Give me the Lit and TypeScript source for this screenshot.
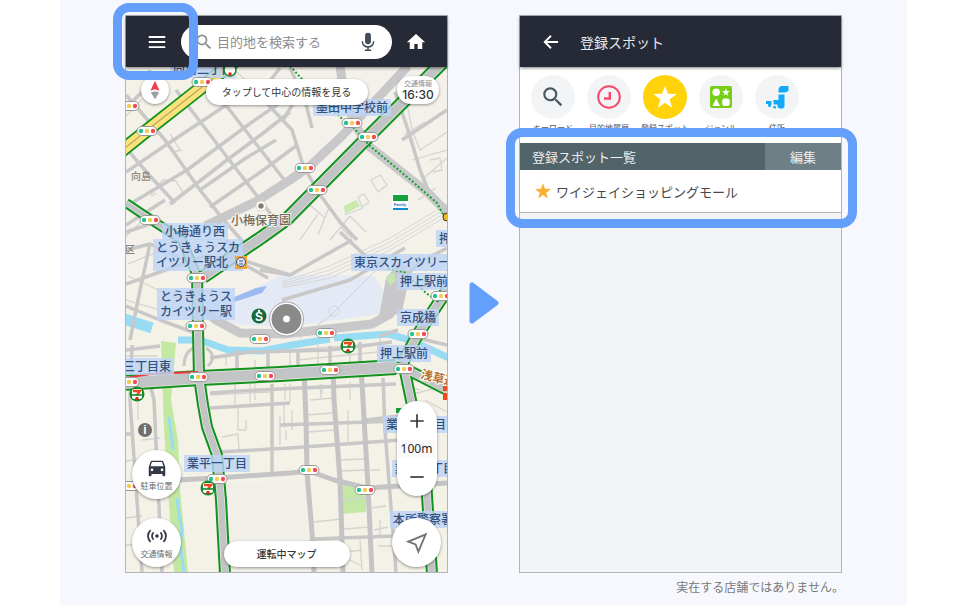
import { LitElement, html, svg, css } from "lit";
import { customElement } from "lit/decorators.js";
import { classMap } from "lit/directives/class-map.js";

const FONT = css`"Noto Sans CJK JP", "Noto Sans", sans-serif`;

/* ---------- map data (one unit = one CSS pixel at base width) ---------- */

const thinStreets = [
  "M126 116L142 99M126 236L150 214M128 264L160 251M163 139L172 152L182 150M152 193L163 180L176 181L184 194",
  "M149 190L152 196L156 193M170 134L180 150M232 68L250 84M215 68L233 90",
  "M405 92L412 130L420 150L447 132M404 135L425 122M412 160L447 150M424 178L447 158M430 160L440 158L442 170L433 172M418 200L436 188",
  "M371 180L380 175L387 185L378 192ZM358 197L364 194L369 202L362 207ZM345 215L363 208M330 240L350 216M318 235L330 205M300 240L318 214",
  "M340 227L352 238M310 205L325 218M350 216L366 232",
  "M255 360V400M226 356V366M290 352V367M318 345V366M350 342V365M380 338V362M255 352L380 344M297 360L378 352",
  "M126 356H158M138 398V420M210 395L270 392M235 384V404M250 384V402M290 384V402M310 400L334 398M320 384L321 398M350 382V400",
  "M238 408V430H246V420M222 437L238 434L239 450M280 415V445M286 430V440M292 410V430M284 405V428M348 410V442",
  "M306 415L333 413M308 432L334 430M338 460L365 459M340 471L366 470M370 470H380M372 508L386 506M374 530L388 527M378 546H392",
  "M344 500L366 497M313 522L342 519M344 529L370 527M360 540L362 570M346 552L362 550M350 560L362 566M380 520V535",
  "M126 461L150 458M126 518L142 516M126 545L142 544M142 440L160 438M410 395L447 385M425 400L447 412M400 384L420 390",
  "M285 384V400M322 384V394M126 300L160 310M160 250L175 262M128 276L180 300",
];

const streets = [
  "M126 95L165 140L200 190L222 218L250 250",
  "M176 90L227 157L264 205L275 220",
  "M214 90L253 140L286 182",
  "M262 98L292 130L303 165L318 192L340 222L357 240",
  "M126 148L150 176L175 203",
  "M126 172L163 147L240 96",
  "M130 204L187 170L252 122L290 96",
  "M170 204L227 160L262 134L290 112",
  "M200 190L246 158L276 140",
  "M210 207L262 171L296 146",
  "M126 225L165 200",
  "M126 108L142 92L150 70",
  "M290 68L305 100L312 128M300 92L282 122M280 68L252 104",
  "M395 92L408 130L420 170L430 195M447 110L402 140",
  "M126 250L150 244L190 262M126 232L156 222",
  "M126 284L160 272L205 256L248 262L290 275",
  "M150 244L140 290L130 340",
  "M126 306L160 320L195 333",
  "M226 240L240 262L268 278",
  "M340 232L372 262M352 240L290 275L260 270M405 248L350 280L282 300",
  "M447 248L420 262L402 280",
  "M418 338L447 345M425 322L447 300M398 330L380 336",
  "M126 350L160 346M210 358L250 352L330 350L392 342",
  "M237 350V378M268 350V372M298 352V372M330 346V370M360 342V366",
  "M210 393L240 391L300 388L396 384",
  "M210 408L290 403M280 425L398 421M218 452L290 448L400 440",
  "M132 345L130 400L142 572M150 384L154 400L162 572",
  "M383 378L385 430L392 520L396 572",
  "M313 539L395 536M313 561L345 560M126 484L190 480",
  "M272 384V473M366 420L398 416M126 434H134",
];

const avenues = [
  "M304 368L306 420L307 472L312 533L314 572",
  "M333 368L334 400L340 480L343 572",
  "M361 368L363 400L368 487L372 572",
  "M176 480L217 478L290 473L309 471L334 480L367 488L400 486L447 483",
];

const wideRoads = [
  "M408 66L372 104L342 136L310 166L290 180L257 201L205 226",
  "M340 66L345 100L357 128L370 147L427 192L447 212",
  "M203 310L216 320L240 333L284 334L372 324L390 314L396 290L404 270",
];

const greenRoads = [
  { d: "M443 62L363 142L287 219L262 237L203 277", w: 13 },
  { d: "M126 203L150 219L182 240L197 276", w: 9 },
  { d: "M197 272L198 330L199 377L203 405L207 427L217 455L221 500L225 574", w: 11 },
  { d: "M447 290L418 334L403 362", w: 12 },
  { d: "M403 362L412 405L426 480L432 574", w: 11 },
  { d: "M396 367L404 368L447 390", w: 11 },
  { d: "M120 383L200 378L280 374L396 367", w: 15 },
];

const water = [
  { d: "M124 319L152 328", w: 11 },
  { d: "M178 340L200 340L228 350L262 351L292 345L330 339", w: 7 },
  { d: "M334 338L388 334L410 340L449 358", w: 7 },
  { d: "M169 417L173 450M177 498L179 515L182 530L180 545L184 572", w: 3 },
];

const signals = [
  [202, 82], [129, 106], [147, 131], [150, 220], [352, 123], [368, 137], [305, 168], [317, 190],
  [197, 278], [196, 326], [260, 339], [198, 377], [265, 376], [129, 382], [326, 333], [441, 296],
  [418, 334], [330, 370], [404, 369], [217, 479], [129, 486], [309, 470], [365, 490],
];

const placeNames: { x: number; y: number; lines: string[] }[] = [
  { x: 173, y: 74, lines: ["向島二丁目"] },
  { x: 316, y: 112, lines: ["墨田中学校前"] },
  { x: 165, y: 236, lines: ["小梅通り西"] },
  { x: 156, y: 252, lines: ["とうきょうスカ", "イツリー駅北"] },
  { x: 160, y: 301, lines: ["とうきょうス", "カイツリー駅"] },
  { x: 123, y: 371, lines: ["三丁目東"] },
  { x: 439, y: 243, lines: ["押上"] },
  { x: 354, y: 267, lines: ["東京スカイツリー"] },
  { x: 400, y: 286, lines: ["押上駅前"] },
  { x: 400, y: 322, lines: ["京成橋"] },
  { x: 380, y: 358, lines: ["押上駅前"] },
  { x: 187, y: 468, lines: ["業平一丁目"] },
  { x: 386, y: 429, lines: ["業平三丁目"] },
  { x: 395, y: 473, lines: ["業平四丁目"] },
  { x: 393, y: 524, lines: ["本所警察署"] },
];

const stores = [[137, 394], [348, 346], [208, 488]];

@customElement("area-map")
export class AreaMap extends LitElement {
  static styles = css`
    :host { display: block; }
    svg { display: block; width: 100%; height: auto; font-family: ${FONT}; }
    .thin { stroke: #d5d3d0; stroke-width: 1.3; }
    .street { stroke: #c9c8c8; stroke-width: 3.5; }
    .avenue { stroke: #c4c4c5; stroke-width: 5; }
    .wide { stroke: #c8c8ca; stroke-width: 9; }
    .rail { stroke: #d8d7d4; stroke-width: 1; }
    .line { fill: none; stroke-linejoin: round; }
    .name { font-size: 12px; font-weight: 500; fill: #33517f; }
    .plate { fill: #bdd4f6; fill-opacity: 0.8; }
    .area { font-size: 10px; font-weight: 500; fill: #8b867b; }
    .spot { font-size: 12px; font-weight: 500; fill: #756b5c; stroke: #f5f2e9; stroke-width: 2; paint-order: stroke; }
    .route { font-size: 12px; font-weight: 700; fill: #b8722c; stroke: #fff; stroke-width: 2; paint-order: stroke; }
    .badge { font-family: "Liberation Sans", sans-serif; font-size: 12px; font-weight: 700; fill: #fff; text-anchor: middle; }
    .brand { font-family: "Liberation Sans", sans-serif; font-size: 4px; font-weight: 700; fill: #0a72b5; text-anchor: middle; }
  `;

  private signal([x, y]: number[]) {
    return svg`<g>
      <rect x=${x - 10} y=${y - 4.5} width="20" height="9" rx="4.5" fill="#fff" stroke="#9a9693" />
      <circle cx=${x - 6} cy=${y} r="2.2" fill="#27c095" />
      <circle cx=${x} cy=${y} r="2.2" fill="#f3cb55" />
      <circle cx=${x + 6} cy=${y} r="2.2" fill="#f14e52" />
    </g>`;
  }

  private store([x, y]: number[]) {
    return svg`<g>
      <circle cx=${x} cy=${y} r="7.5" fill="#148a2c" />
      <rect x=${x - 5} y=${y - 5} width="10" height="10" rx="2" fill="#fff" />
      <path d=${`M${x - 4} ${y - 3}H${x + 3}L${x} ${y + 1}`} stroke="#ee4a22" stroke-width="2.4" fill="none" />
      <path d=${`M${x - 5} ${y + 1}H${x + 5}`} stroke="#148a2c" stroke-width="1.6" />
      <circle cx=${x} cy=${y + 4.4} r="1.7" fill="#e9251c" />
    </g>`;
  }

  private place(p: { x: number; y: number; lines: string[] }) {
    const widest = Math.max(...p.lines.map((t) => t.length));
    return svg`
      <rect class="plate" x=${p.x - 3} y=${p.y - 13} width=${widest * 12 + 6} height=${2 + p.lines.length * 15} />
      <text class="name">${p.lines.map((t, i) => svg`<tspan x=${p.x} y=${p.y + i * 15}>${t}</tspan>`)}</text>`;
  }

  render() {
    return html`<svg viewBox="126 67 321 505" role="img" aria-label="地図">
      <rect x="126" y="66" width="321" height="506" fill="#f4f1e7" />
      <path d="M126 150L240 68H447V230L300 300L126 280Z" fill="#f3f1ea" />
      <path d="M225 484L305 479L310 572H229Z" fill="#f0efe8" />
      <path d="M161 341L176 343L171 400L178 440L180 490L188 572H174L168 490L164 430Z" fill="#c3e8a2" />
      <path d="M340 483L366 490V512L341 514Z" fill="#c3e8a5" />
      <path d="M344 206L356 200L360 206L345 214Z" fill="#c9e9ae" />
      <path d="M205 302L240 296L282 275L374 276L383 290L380 314L286 327L240 325L205 312Z" fill="#e4eaf5" />
      <path d="M232 298L256 288L267 286L262 293L234 302Z" fill="#9dbaf0" />
      ${water.map((w) => svg`<path class="line" d=${w.d} stroke="#98dcf3" stroke-width=${w.w} />`)}
      ${thinStreets.map((d) => svg`<path class="line thin" d=${d} />`)}
      ${[0, 4, 8, 12].map((o) => svg`<path class="line rail"
        d=${`M282 ${282 + o / 2}L330 ${266 + o}L390 ${238 + o}L447 ${204 + o}`} />`)}
      ${streets.map((d) => svg`<path class="line street" d=${d} />`)}
      ${avenues.map((d) => svg`<path class="line avenue" d=${d} />`)}
      ${wideRoads.map((d) => svg`<path class="line wide" d=${d} />`)}
      <path d="M184 366Q184 352 194 348M206 348Q218 356 208 366" stroke="#c9c8c8" stroke-width="3" fill="none" />
      <path d="M386 278L400 262L410 274L402 312L378 322Z" fill="#c8c8ca" />
      <path d="M386 278L394 272L396 280L390 286Z" fill="#c5e6b0" />
      <path d="M384 262L330 316L300 338" stroke="#cfd0d4" fill="none" />
      <circle cx="334" cy="311" r="5" stroke="#d2d5dc" fill="none" />

      <path class="line" d="M120 152L150 128L197 91L236 60" stroke="#12931f" stroke-width="14" />
      <path class="line" d="M120 152L150 128L197 91L236 60" stroke="#fbe27c" stroke-width="10.5" />
      <path class="line" d="M120 152L150 128L197 91L236 60" stroke="#c1a557" stroke-width="1.2" />

      ${greenRoads.map((r) => svg`<path class="line" d=${r.d} stroke="#12931f" stroke-width=${r.w + 1} />`)}
      ${greenRoads.map((r) => svg`<path class="line" d=${r.d} stroke="#e6e6e0" stroke-width=${r.w - 3} />`)}
      ${greenRoads.map((r) => svg`<path class="line" d=${r.d} stroke="#c3c4c6" stroke-width=${r.w - 4.5} />`)}
      <path class="line" d="M126 378L150 374L198 372" stroke="#f0393c" stroke-width="2" />
      <path class="line" d="M290 66L312 90L340 117L352 126L370 146L413 182L437 203L446 220" stroke="#12a02a" stroke-width="2" stroke-dasharray="2 2" />
      <path class="line" d="M388 269L404 272L426 293L440 303" stroke="#12a02a" stroke-width="2" stroke-dasharray="2 2" />

      <text class="area" x="131" y="180">向島</text>
      <text class="area" x="125" y="253">区</text>
      ${placeNames.map((p) => this.place(p))}
      <rect x="235" y="256" width="12" height="13" fill="#f1a536" />
      <circle cx="241" cy="262" r="4.5" fill="#dce6f8" stroke="#33517f" />
      <path d="M239 261H243M239 264H243" stroke="#33517f" />
      <circle cx="261" cy="206" r="5" fill="#fff" stroke="#dad6cd" />
      <circle cx="261" cy="206" r="2.7" fill="#857b70" />
      <text class="spot" x="231" y="225">小梅保育園</text>
      <text class="route" x="420" y="378" transform="rotate(14 420 378)">浅草通り</text>

      <circle cx="230" cy="70" r="6" fill="#fff" stroke="#148a2c" stroke-width="1.5" />
      <circle cx="230" cy="74" r="1.8" fill="#e9251c" />
      <rect x="392" y="194" width="16" height="16" fill="#fff" />
      <rect x="393" y="195" width="15" height="6" fill="#17a13c" />
      <text class="brand" x="400" y="206">Family</text>
      <rect x="393" y="208" width="15" height="2" fill="#0a8bcd" />
      <rect x="396" y="408" width="8" height="5" fill="#17a13c" />
      <path d="M443 386H447V391H443ZM443 393H447V400H443Z" fill="#ee4a22" />
      <circle cx="447" cy="217" r="4" fill="#f2b929" stroke="#33302a" />

      ${signals.map((s) => this.signal(s))}
      ${stores.map((s) => this.store(s))}
      <circle cx="259" cy="316" r="7.5" fill="#166a3a" />
      <text class="badge" x="259" y="321">S</text>
      <circle cx="259" cy="311" r="1.2" fill="#fff" />
      <circle cx="145" cy="430" r="7" fill="#6f6f6f" />
      <text class="badge" x="145" y="434">i</text>

      <circle cx="286.500" cy="319" r="17" fill="#fff" stroke="#a5a5a5" />
      <circle cx="286.500" cy="319" r="15" fill="#8a8a88" />
      <circle cx="286.500" cy="319" r="4" fill="#fff" stroke="#777" stroke-width="0.8" />
    </svg>`;
  }
}

/* ---------- icons ---------- */

const STAR = "M12 1.500L14.700 9.100L22.700 9.300L16.300 14.200L18.600 22L12 17.400L5.400 22L7.700 14.200L1.300 9.300L9.300 9.100Z";
const SEARCH =
  "M15.500 14h-.79l-.28-.27A6.471 6.471 0 0 0 16 9.500 6.500 6.500 0 1 0 9.500 16c1.610 0 3.090-.59 4.230-1.570l.27.28v.79l5 4.990L20.490 19l-4.990-5zm-6 0C7.010 14 5 11.990 5 9.500S7.010 5 9.500 5 14 7.010 14 9.500 11.990 14 9.500 14z";

const icon = (name: string, body: unknown) =>
  html`<svg class=${`icon ${name}`} viewBox="0 0 24 24" aria-hidden="true">${body}</svg>`;

const searchIcon = icon("search", svg`<path fill="currentColor" d=${SEARCH} />`);
const starIcon = icon("star", svg`<path fill="currentColor" d=${STAR} />`);
const clockIcon = icon("clock", svg`
  <circle cx="12" cy="12" r="10.800" fill="none" stroke="currentColor" stroke-width="2" />
  <path d="M12.800 7V13.500H7" fill="none" stroke="currentColor" stroke-width="2.400" />`);
const genreIcon = icon("genre", svg`
  <rect x="1" y="1" width="22" height="22" rx="2" fill="currentColor" />
  <circle cx="7.200" cy="7.200" r="3.800" fill="#fff" />
  <path fill="#fff" transform="translate(12.600 2.800) scale(.36)" d=${STAR} />
  <path fill="#fff" d="M7.200 13.500L11 21H3.400Z" />
  <rect x="13.200" y="13.500" width="7.600" height="7.600" rx="2.400" fill="#fff" />`);
const addressIcon = icon("address", svg`
  <path fill="currentColor" d="M14 2.500L16 1H23.500V6L20 7.500H13.500V5Z" />
  <path fill="currentColor" d="M13.500 9.500H19.500V22L18 23.500H14L12.500 21.500V19.500H8.500V15H13.500Z" />
  <path fill="currentColor" d="M1 16H6.500V19L5.500 22H3.500L3 19H1Z" />
  <path fill="currentColor" d="M8 21.200H11V23.500H9.500L8 22.500Z" />`);
const menuIcon = icon("menu", svg`<path d="M3 6.500H21M3 12H21M3 17.500H21" stroke="currentColor" stroke-width="2" />`);
const homeIcon = icon("home", svg`<path fill="currentColor" d="M10 20.500v-6h4v6h5.500v-8.300H23L12 2.500 1 12.200H4.500v8.300z" />`);
const micIcon = icon("mic", svg`
  <rect x="8.800" y="2" width="6.400" height="12.500" rx="3.200" fill="currentColor" />
  <path d="M5.800 11.300A6.200 6.200 0 0 0 18.200 11.300M12 17.500V21M8.500 21H15.500" fill="none" stroke="currentColor" stroke-width="1.600" />`);
const backIcon = icon("back", svg`<path d="M20.500 12H5M12 4.500L4.500 12L12 19.500" fill="none" stroke="currentColor" stroke-width="2.200" />`);
const compassIcon = icon("compass", svg`
  <path d="M12 1L17.500 13L12 11L6.500 13Z" fill="#f33b4b" />
  <path d="M7 15L12 13.500L17 15L12 23Z" fill="#9b9ea3" />`);
const carIcon = icon("car", svg`<path fill="currentColor" fill-rule="evenodd"
  d="M18.900 5c-.2-.6-.8-1-1.400-1h-11c-.7 0-1.200.4-1.400 1L3 11v9c0 .6.400 1 1 1h1c.6 0 1-.4 1-1v-1.500h12V20c0 .6.400 1 1 1h1c.6 0 1-.4 1-1v-9zM6.500 15.500a1.500 1.500 0 1 1 0-3 1.500 1.500 0 0 1 0 3zm11 0a1.500 1.500 0 1 1 0-3 1.500 1.500 0 0 1 0 3zM5 10l1.500-4.500h11L19 10z" />`);
const waveIcon = icon("wave", svg`
  <circle cx="12" cy="12" r="2" fill="currentColor" />
  <path d="M8.300 8A5.500 5.500 0 0 0 8.300 16M15.700 8A5.500 5.500 0 0 1 15.700 16M5 5.500A9 9 0 0 0 5 18.500M19 5.500A9 9 0 0 1 19 18.500"
    fill="none" stroke="currentColor" stroke-width="2" />`);
const locateIcon = icon("locate", svg`<path d="M21.500 2.500L2.500 10.500L10.500 13.500L13.500 21.500Z" fill="none" stroke="currentColor" stroke-width="2" />`);
const plusIcon = icon("plus", svg`<path d="M4 12H20M12 4V20" stroke="currentColor" stroke-width="2" />`);
const minusIcon = icon("minus", svg`<path d="M4 12H20" stroke="currentColor" stroke-width="2" />`);

const shared = css`
  * { box-sizing: border-box; }
  button, input { font: inherit; color: inherit; border: 0; padding: 0; margin: 0; background: none; }
  button { cursor: pointer; }
  .icon { display: block; width: 20px; height: 20px; flex: none; }
  .screen { position: relative; border: 1px solid #b3b4b7; }
  .bar {
    position: relative; z-index: 1; display: flex; align-items: center; height: 51px;
    background: #262a36; color: #fff; box-shadow: 0 1px 3px rgba(0, 0, 0, 0.5);
  }
  .highlight { position: absolute; z-index: 3; border: 9px solid #649ffc; pointer-events: none; }
`;

@customElement("map-screen")
export class MapScreen extends LitElement {
  static styles = [
    shared,
    css`
      :host { display: block; }
      .bar { gap: 8px; padding: 0 15px; }
      .tool { display: flex; justify-content: center; align-items: center; width: 32px; height: 32px; }
      .menu { width: 22px; height: 22px; }
      .box {
        flex: 1; min-width: 0; display: flex; align-items: center; height: 34px; padding: 0 13px;
        border-radius: 17px; background: #fff; color: #8b8c8f;
      }
      .box input { flex: 1; min-width: 0; margin-left: 3px; font-size: 13px; line-height: 20px; outline: 0; }
      .box input::placeholder { color: #8b8c8f; opacity: 1; }
      .mic { width: 22px; height: 22px; color: #444b58; }
      .highlight { left: -13px; top: -13px; width: 85px; height: 77px; border-radius: 16px; }
      .map { position: relative; }
      .overlay {
        position: absolute; inset: 0; display: flex; flex-direction: column;
        justify-content: space-between; padding: 9px 6px 5px; color: #34363b;
      }
      .row { display: grid; grid-template-columns: 1fr auto 1fr; }
      .row.low { align-items: end; }
      .float { background: #fff; box-shadow: 0 1px 3px rgba(0, 0, 0, 0.4); }
      .needle { display: flex; justify-content: center; align-items: center; width: 28px; height: 28px; margin-left: 9px; border-radius: 50%; }
      .hint { width: 162px; height: 26px; margin-top: 3px; border-radius: 13px; font-size: 10px; line-height: 26px; }
      .drive { width: 126px; height: 26px; border-radius: 13px; font-size: 10px; font-weight: 500; line-height: 26px; }
      .time {
        justify-self: end; display: flex; flex-direction: column; align-items: center; justify-content: center;
        width: 42px; height: 28px; margin-right: 2px; border-radius: 14px; font-size: 7px; line-height: 10px; color: #8b8c8f;
      }
      .time b { font: 500 12px/14px Inter, sans-serif; color: #34363b; }
      .stack { display: flex; flex-direction: column; gap: 19px; }
      .stack.right { justify-self: end; align-items: center; gap: 22px; }
      .round {
        display: flex; flex-direction: column; align-items: center; justify-content: center; gap: 1px;
        width: 49px; height: 49px; border-radius: 50%; font-size: 8px; line-height: 12px; color: #6a6c70;
      }
      .car, .wave { width: 22px; height: 22px; color: #343a46; }
      .locate { width: 22px; height: 22px; color: #707277; }
      .scale {
        display: flex; flex-direction: column; align-items: center; justify-content: space-between;
        width: 40px; height: 95px; padding: 10px 0 9px; border-radius: 20px;
      }
      .scale output { width: 100%; text-align: center; font: 400 12px/18px "Noto Sans", sans-serif; color: #26282c; background: #fafafa; }
    `,
  ];

  render() {
    return html`<section class="screen">
      <header class="bar">
        <button class="tool" aria-label="メニュー">${menuIcon}</button>
        <label class="box">
          ${searchIcon}
          <input type="text" placeholder="目的地を検索する" aria-label="目的地を検索する" />
          <button aria-label="音声検索">${micIcon}</button>
        </label>
        <button class="tool" aria-label="ホーム">${homeIcon}</button>
      </header>
      <div class="map">
        <area-map></area-map>
        <div class="overlay">
          <div class="row">
            <button class="float needle" aria-label="方位">${compassIcon}</button>
            <button class="float hint">タップして中心の情報を見る</button>
            <button class="float time">交通情報<b>16:30</b></button>
          </div>
          <div class="row low">
            <div class="stack">
              <button class="float round">${carIcon}駐車位置</button>
              <button class="float round">${waveIcon}交通情報</button>
            </div>
            <button class="float drive">運転中マップ</button>
            <div class="stack right">
              <div class="float scale">
                <button aria-label="拡大">${plusIcon}</button>
                <output>100m</output>
                <button aria-label="縮小">${minusIcon}</button>
              </div>
              <button class="float round" aria-label="現在地">${locateIcon}</button>
            </div>
          </div>
        </div>
      </div>
      <div class="highlight"></div>
    </section>`;
  }
}

const tabs = [
  { label: "キーワード", kind: "t-search", icon: searchIcon },
  { label: "目的地履歴", kind: "t-clock", icon: clockIcon },
  { label: "登録スポット", kind: "t-star", icon: starIcon },
  { label: "ジャンル", kind: "t-genre", icon: genreIcon },
  { label: "住所", kind: "t-address", icon: addressIcon },
];

@customElement("spot-screen")
export class SpotScreen extends LitElement {
  static styles = [
    shared,
    css`
      :host { display: grid; }
      .screen { background: #f3f4f6; }
      .bar { gap: 19px; padding: 0 21px; }
      h1 { margin: 0; font-size: 14px; font-weight: 400; line-height: 20px; color: #e8e9eb; }
      .tabs { display: flex; height: 76px; padding: 8px 5px 0; background: #fff; }
      .tab { width: 56px; display: flex; flex-direction: column; align-items: center; font-size: 8px; line-height: 12px; color: #55585e; white-space: nowrap; }
      .disc { display: flex; justify-content: center; align-items: center; width: 44px; height: 44px; margin-bottom: 3px; border-radius: 50%; background: #f2f4f6; }
      .disc .icon { width: 24px; height: 24px; }
      .t-search { color: #475a61; }
      .disc .icon.search, .disc .icon.star { width: 26px; height: 26px; }
      .t-clock { color: #f8476c; }
      .t-star { background: #ffd20a; color: #fff; }
      .t-genre { color: #78ce16; }
      .t-address { color: #12aaf8; }
      .list { position: relative; font-size: 13px; }
      .head { display: flex; height: 27px; line-height: 27px; background: #51646a; color: #eceff0; }
      h2 { flex: 1; margin: 0; padding-left: 12px; font-size: 13px; font-weight: 400; }
      .edit { width: 76px; background: #6e7f85; }
      ul { margin: 0; padding: 0; list-style: none; }
      .spot { display: flex; align-items: center; gap: 4px; height: 43px; padding: 0 14px; background: #fff; border-bottom: 1px solid #b3b4b7; color: #45474b; }
      .spot a { color: inherit; text-decoration: none; }
      .spot .icon { width: 18px; height: 18px; color: #f8b134; }
      .list .highlight { inset: -15px -16px -15px -14px; border-radius: 16px; }
    `,
  ];

  render() {
    return html`<section class="screen">
      <header class="bar">
        <button aria-label="戻る">${backIcon}</button>
        <h1>登録スポット</h1>
      </header>
      <nav class="tabs">
        ${tabs.map((t) => html`<button class="tab">
          <span class=${classMap({ disc: true, [t.kind]: true })}>${t.icon}</span>${t.label}
        </button>`)}
      </nav>
      <div class="list">
        <div class="head"><h2>登録スポット一覧</h2><button class="edit">編集</button></div>
        <ul>
          <li class="spot">${starIcon}<a href="#spot">ワイジェイショッピングモール</a></li>
        </ul>
        <div class="highlight"></div>
      </div>
    </section>`;
  }
}

@customElement("app-root")
export class AppRoot extends LitElement {
  static styles = css`
    :host { display: block; padding: 0 61px 0 60px; background: #fff; font-family: ${FONT}; }
    .panel { min-height: 100vh; background: #f6f8fd; }
    .stage { display: grid; grid-template-columns: minmax(0, 1fr) 71px minmax(0, 1fr); padding: 15px 65px 0; }
    .next { align-self: center; justify-self: center; width: 30px; height: 42px; margin-top: 17px; }
    .note { margin: 0; padding: 4px 63px 0; text-align: right; font-size: 12px; line-height: 20px; color: #77797e; }
  `;

  render() {
    return html`<main class="panel">
      <div class="stage">
        <map-screen></map-screen>
        <svg class="next" viewBox="0 0 30 42" aria-hidden="true">
          <path d="M3 3V39L27 21Z" fill="#649ffc" stroke="#649ffc" stroke-width="5" stroke-linejoin="round" />
        </svg>
        <spot-screen></spot-screen>
      </div>
      <p class="note">実在する店舗ではありません。</p>
    </main>`;
  }
}
